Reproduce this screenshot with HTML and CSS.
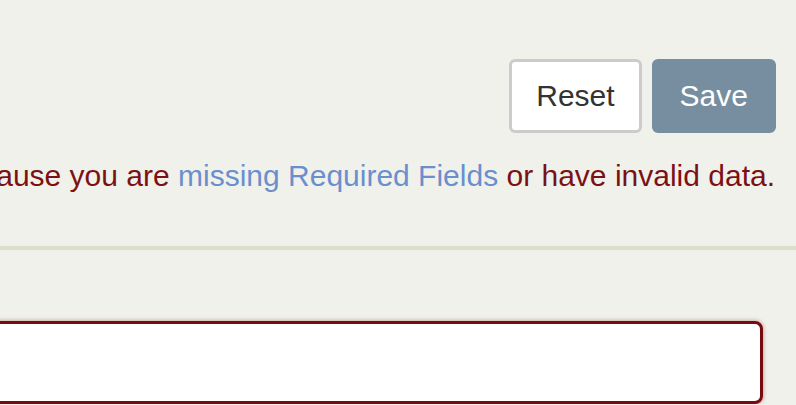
FILE: index.html
```
<!DOCTYPE html>
<html lang="en">
<head>
    <meta charset="UTF-8">
    <meta name="viewport" content="width=device-width, initial-scale=1.0">
    <title>Edit record</title>
    <link rel="stylesheet" href="styles.css">
</head>
<body>
    <div class="toolbar">
        <div class="actions">
            <button class="btn btn-reset" type="reset">Reset</button>
            <button class="btn btn-save" type="submit" disabled>Save</button>
        </div>
        <div class="notice">
            <p>This form cannot be saved because you are <a href="#required">missing Required Fields</a> or have invalid data.</p>
        </div>
    </div>

    <div class="form-body">
        <input class="field field-error" type="text" aria-invalid="true">
    </div>
</body>
</html>
```

FILE: styles.css
```
body {
    font-family: "Liberation Sans", Arial, sans-serif;
    background-color: #f1f1eb;
    color: #333;
    margin: 0;
    padding: 0;
    overflow: hidden;
}
.toolbar {
    padding: 59px 20px 0 0;
    border-bottom: 4px solid #dcddcb;
    height: 250px;
    box-sizing: border-box;
}
.actions {
    display: flex;
    justify-content: flex-end;
    gap: 10px;
}
.btn {
    font-family: inherit;
    font-size: 30px;
    line-height: 68px;
    padding: 0 24px;
    border: 3px solid #ccc;
    border-radius: 6px;
    background-color: #fff;
    color: #333;
    cursor: pointer;
}
.btn-save {
    background-color: #778ea0;
    border-color: #778ea0;
    color: #fff;
    padding: 0 25px;
    cursor: default;
}
.notice {
    display: flex;
    justify-content: flex-end;
    margin-top: 26px;
    padding-right: 1px;
}
.notice p {
    margin: 0;
    font-size: 30px;
    line-height: 34px;
    color: #7b1114;
    white-space: nowrap;
}
.notice a {
    color: #6a8fcd;
    text-decoration: none;
}
.form-body {
    padding: 71px 33px 0 0;
    margin-left: -20px;
}
.field {
    display: block;
    width: 100%;
    height: 83px;
    box-sizing: border-box;
    border: 3px solid #780b0d;
    border-radius: 8px;
    background-color: #fff;
    box-shadow: 0 0 4px rgba(120, 11, 13, 0.45);
    font-size: 30px;
    padding: 0 16px;
    outline: none;
}
```
